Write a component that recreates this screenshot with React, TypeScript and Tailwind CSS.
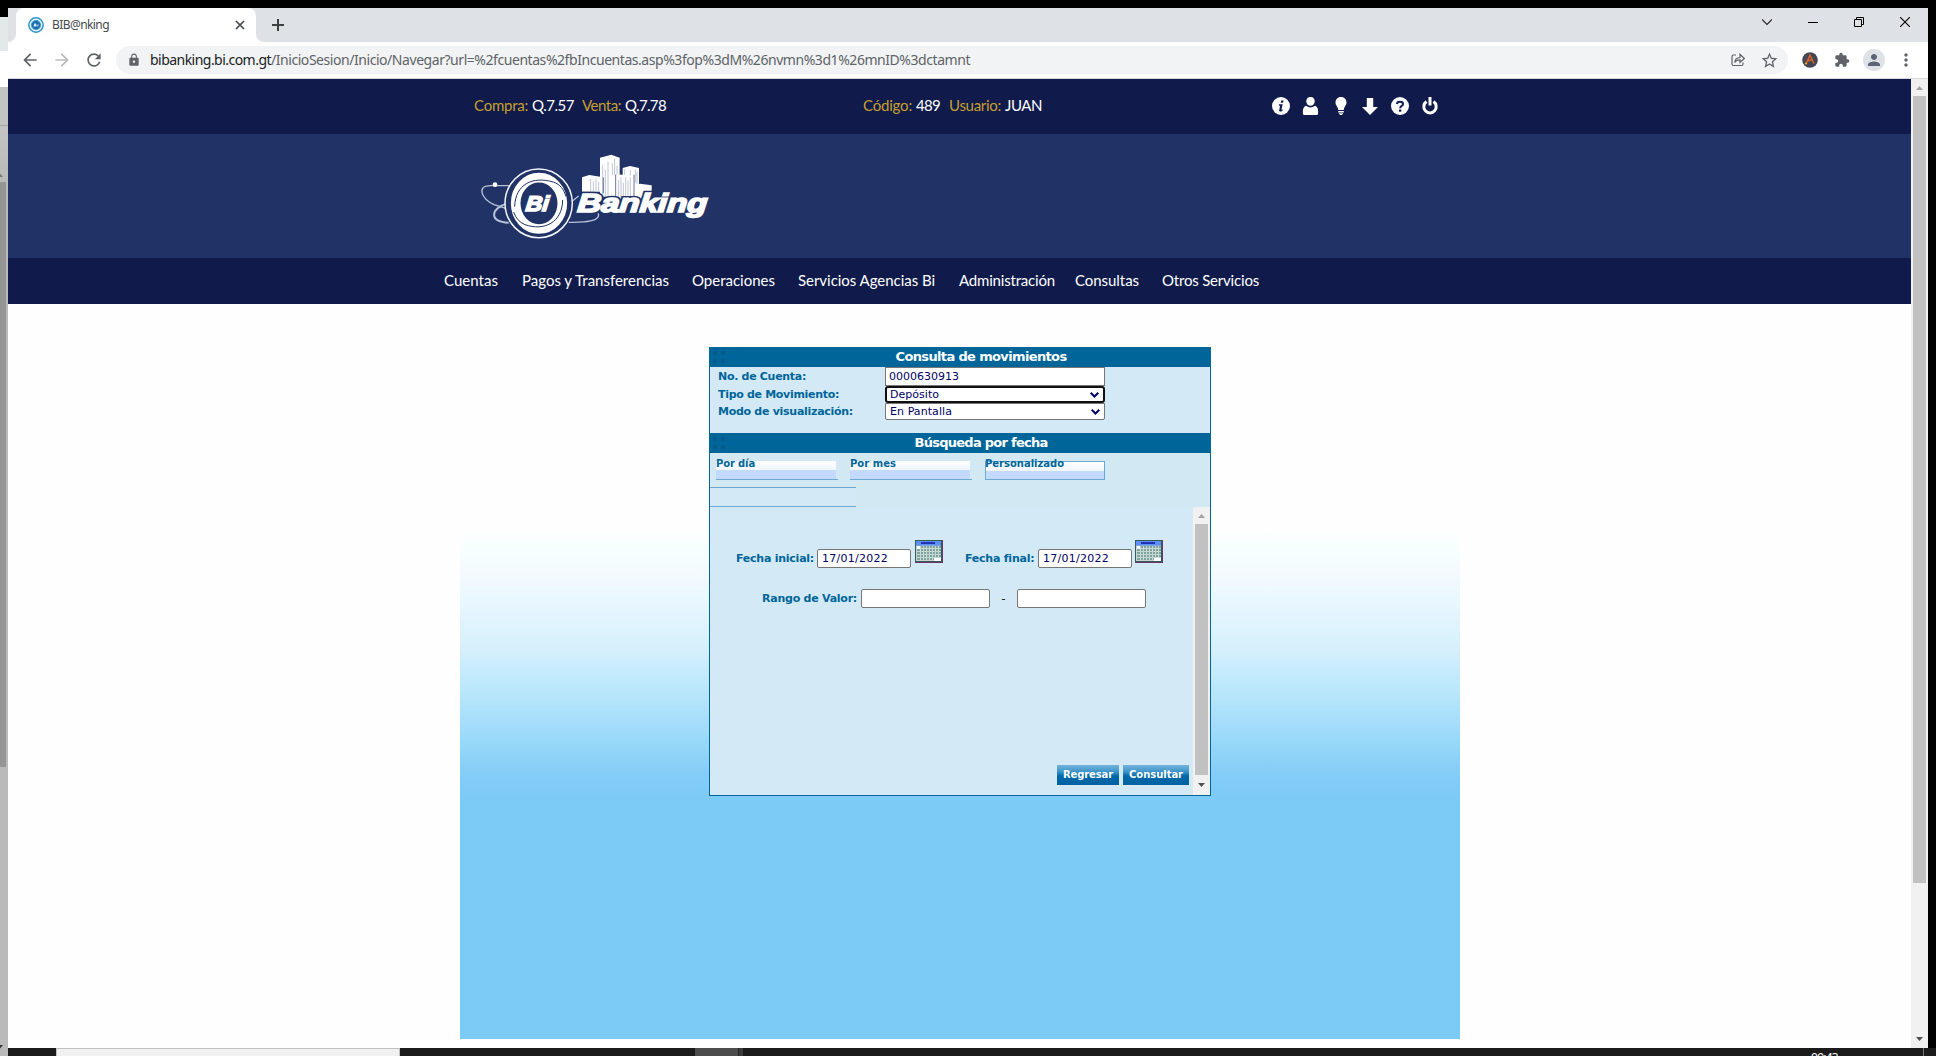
import React, { useLayoutEffect, useRef, useState } from "react";
import {
  MdArrowBack,
  MdArrowForward,
  MdRefresh,
  MdLock,
  MdStarOutline,
  MdExtension,
  MdPerson,
  MdMoreVert,
} from "react-icons/md";

/* Text run whose tracking is adjusted so that it fills a given width. */
function Fit({ w, className = "", children }: { w: number; className?: string; children: string }) {
  const ref = useRef<HTMLSpanElement>(null);
  const [ls, setLs] = useState(0);
  useLayoutEffect(() => {
    if (ref.current) setLs((w - ref.current.getBoundingClientRect().width) / children.length);
  }, [w, children]);
  return (
    <span className="block shrink-0 overflow-visible whitespace-pre" style={{ width: w }}>
      <span ref={ref} className={"inline-block whitespace-pre " + className} style={{ letterSpacing: ls }}>
        {children}
      </span>
    </span>
  );
}

function Favicon() {
  return (
    <svg viewBox="0 0 16 16" className="size-4 shrink-0">
      <circle cx="8" cy="8" r="7.2" fill="#e9f4fa" stroke="#2d96cc" strokeWidth="1.5" />
      <circle cx="8" cy="8" r="4.6" fill="#1b6fb0" stroke="#3b9ccc" strokeWidth="1" />
      <path d="M5.6 9.6l.6-3h1.9l-.2 1.1.8-.1-.4 2zM9.2 9.6l.4-2.2h1l-.4 2.2z" fill="#dcecf6" />
    </svg>
  );
}

function TitleBar() {
  return (
    <div className="flex h-[34px] shrink-0 bg-[#dee1e6]">
      <div className="flex h-[34px] w-2 bg-white">
        <div className="w-2 rounded-br-lg bg-[#dee1e6]" />
      </div>
      <div className="flex h-[34px] w-[240px] items-center rounded-t-lg bg-white pl-3 pr-[11px]">
        <Favicon />
        <div className="ml-2 flex-1 font-['Noto_Sans',sans-serif] text-xs leading-4 text-[#45494d]">
          <Fit w={57}>BIB@nking</Fit>
        </div>
        <svg viewBox="0 0 10 10" className="size-[10px]" stroke="#45494d" strokeWidth="1.7">
          <path d="M1 1l8 8M9 1l-8 8" />
        </svg>
      </div>
      <div className="flex h-[34px] w-2 bg-white">
        <div className="w-2 rounded-bl-lg bg-[#dee1e6]" />
      </div>
      <svg viewBox="0 0 12 12" className="ml-2 mt-[11px] size-3" stroke="#3c4043" strokeWidth="2">
        <path d="M6 0v12M0 6h12" />
      </svg>
      <div className="ml-auto flex gap-9 pr-[18px] pt-[9px]">
        <svg viewBox="0 0 10 10" className="size-[10px]" fill="none" stroke="#222" strokeWidth="1.1">
          <path d="M0 2.5l5 5 5-5" />
        </svg>
        <svg viewBox="0 0 10 10" className="size-[10px]" stroke="#000">
          <path d="M0 5.5h10" />
        </svg>
        <svg viewBox="0 0 10 10" className="size-[10px]" fill="none" stroke="#000">
          <path d="M.5 2.5h7v7h-7zM2.5 2.500v-2h7v7h-2" />
        </svg>
        <svg viewBox="0 0 10 10" className="size-[10px]" stroke="#000" strokeWidth="1.1">
          <path d="M0 0l10 10M10 0L0 10" />
        </svg>
      </div>
    </div>
  );
}

function ToolBar() {
  return (
    <div className="flex h-[37px] shrink-0 items-center border-b border-[#d5d7da] bg-white pl-3 text-[#5f6368]">
      <MdArrowBack className="size-[20px]" />
      <MdArrowForward className="ml-3 size-[20px] text-[#bababa]" />
      <MdRefresh className="ml-3 size-5" />
      <div className="ml-3 flex h-7 w-[1672px] items-center rounded-full bg-[#f1f3f4] pl-[11px] pr-[9px]">
        <MdLock className="size-[14px]" />
        <div className="ml-[9px] flex font-['Noto_Sans',sans-serif] text-sm leading-5">
          <Fit w={121} className="text-[#202124]">bibanking.bi.com.gt</Fit>
          <Fit w={699}>/InicioSesion/Inicio/Navegar?url=%2fcuentas%2fbIncuentas.asp%3fop%3dM%26nvmn%3d1%26mnID%3dctamnt</Fit>
        </div>
        <svg viewBox="0 0 14 14" className="ml-auto size-[14px]" fill="none" stroke="#5f6368" strokeWidth="1.2">
          <path d="M5 2H2.500Q1 2 1 3.500v7.500Q1 12.500 2.500 12.500h8Q12 12.500 12 11V9.500" />
          <path d="M3.800 9.500Q4 4.800 9 4.500V1.300l4.300 4.200L9 9.300V6.800Q5.500 6.600 3.800 9.500z" />
        </svg>
        <MdStarOutline className="ml-[15px] size-[19px]" />
      </div>
      <svg viewBox="0 0 16 16" className="ml-[14px] size-4">
        <circle cx="8" cy="8" r="7.800" fill="#454553" />
        <path d="M4 12L8 3.200 12 11.500M5.500 9l5.500-1.500" fill="none" stroke="#d9642b" strokeWidth="1.500" />
        <circle cx="4" cy="11.500" r="1.100" fill="#f0b429" />
      </svg>
      <MdExtension className="ml-4 size-[16px]" />
      <span className="ml-[13px] flex size-[22px] items-center justify-center rounded-full bg-[#dee1e6]">
        <MdPerson className="size-[18px] text-[#5b6477]" />
      </span>
      <MdMoreVert className="ml-[11px] size-5" />
    </div>
  );
}

const menu: [string, number, number][] = [
  ["Cuentas", 54, 0],
  ["Pagos y Transferencias", 147, 24],
  ["Operaciones", 83, 23],
  ["Servicios Agencias Bi", 137, 23],
  ["Administración", 96, 24],
  ["Consultas", 64, 20],
  ["Otros Servicios", 97, 23],
];

function Logo() {
  return (
    <svg viewBox="0 0 780 330" className="h-[110px] w-[260px]">
      <g fill="none" stroke="#b9c2da" strokeWidth="4">
        <path d="M120 137H62C18 137 34 176 72 194L110 206" />
        <path d="M112 190C62 205 55 245 116 248" strokeWidth="6" />
        <path d="M296 247C345 248 392 244 385 220" />
        <path d="M296 192L326 168" />
      </g>
      <circle cx="75" cy="134" r="7" fill="#fff" />
      <ellipse cx="206" cy="190" rx="101" ry="103" fill="#203266" stroke="#f4f6fb" strokeWidth="4.500" />
      <ellipse cx="207" cy="190" rx="70" ry="77" fill="none" stroke="#fff" strokeWidth="29" />
      <path d="M134 200C136 132 188 108 250 126C270 133 282 148 288 170" fill="none" stroke="#203266" strokeWidth="3" />
      <path d="M278 180C277 248 222 274 165 254C148 247 137 234 131 216" fill="none" stroke="#203266" strokeWidth="3" />
      <g transform="translate(166 214) skewX(-6)">
        <text fontFamily="'Liberation Sans', sans-serif" fontStyle="italic" fontWeight="700" fontSize="64" fill="#fff" stroke="#fff" strokeWidth="5" textLength="68" lengthAdjust="spacingAndGlyphs">Bi</text>
      </g>
      <g fill="#fff">
        <path d="M336 112L358 105 400 112V155H336z" />
        <path d="M390 53L424 44 449 53V170H390z" />
        <path d="M458 84L480 78 507 84V170H458z" />
        <path d="M437 104H492V180H437z" />
        <path d="M492 138L510 131 545 136V178H492z" />
      </g>
      <g stroke="#203266" strokeWidth="1.500" opacity=".55">
        <path d="M362 116v38M370 124v30M378 116v38M386 126v28M398 74v98M406 90v82M414 66v104M427 70v36M434 56v50M441 78v26M464 88v16M481 90v16M496 88v40M501 94v38M446 120v54M453 112v62M460 128v48M467 112v64M474 122v54M481 112v60" />
      </g>
      <path d="M400 112V160M437 104V176M492 104V170" stroke="#203266" strokeWidth="2" />
      <g transform="translate(321 215) skewX(-4)">
        <text fontFamily="'Liberation Sans', sans-serif" fontStyle="italic" fontWeight="700" fontSize="78" fill="#fff" stroke="#203266" strokeWidth="14" textLength="390" lengthAdjust="spacingAndGlyphs">Banking</text>
        <text fontFamily="'Liberation Sans', sans-serif" fontStyle="italic" fontWeight="700" fontSize="78" fill="#fff" stroke="#fff" strokeWidth="5" textLength="390" lengthAdjust="spacingAndGlyphs">Banking</text>
      </g>
    </svg>
  );
}

function HeaderIcons() {
  const cls = "size-[18px]";
  return (
    <div className="flex gap-[11.8px]">
      <svg viewBox="0 0 18 18" className={cls}>
        <circle cx="9" cy="9" r="9" fill="#fff" />
        <path d="M9.200 3.500h2.300L11 5.700H8.700zM7 7.200h3.700L9.400 12.800l1.300-.3-.3 1.400q-3 1.300-3.300-.5l1-4.700-1.300.1z" fill="#101b4c" />
      </svg>
      <svg viewBox="0 0 18 18" className={cls} fill="#fff">
        <ellipse cx="8.500" cy="4.300" rx="4.200" ry="4.500" />
        <path d="M4 8.700Q8.500 12.200 13 8.700 16.100 10 16.100 14V16.500Q16.100 18 14.500 18H2.500Q.9 18 .9 16.500V14Q.9 10 4 8.700z" />
      </svg>
      <svg viewBox="0 0 18 18" className={cls} fill="#fff">
        <path d="M9 0C5.500 0 3.500 2.500 3.500 5.500 3.500 8.500 6 9.500 6.200 13h5.600C12 9.500 14.500 8.500 14.500 5.500 14.500 2.500 12.500 0 9 0zM6.200 14h5.600v1.500H6.200zM6.800 16.300h4.400L10 18H8z" />
      </svg>
      <svg viewBox="0 0 18 18" className={cls} fill="#fff">
        <path d="M5.800 1h6.400v9H17l-8 8-8-8h4.800z" />
      </svg>
      <svg viewBox="0 0 18 18" className={cls}>
        <circle cx="9" cy="9" r="9" fill="#fff" />
        <path d="M6 7.100Q6 4.700 9 4.700T12 7Q12 8.400 10.400 9.200 9.200 9.800 9.200 11.200" fill="none" stroke="#101b4c" strokeWidth="2" />
        <path d="M8 12.500h2.300v2.200H8z" fill="#101b4c" />
      </svg>
      <svg viewBox="0 0 18 18" className={cls} fill="none" stroke="#fff">
        <path d="M5.500 4.600A6.200 6.200 0 1 0 12.500 4.600" strokeWidth="3" />
        <path d="M9 0v8.500" strokeWidth="3" />
      </svg>
    </div>
  );
}

function SiteHeader() {
  return (
    <div className="flex shrink-0 flex-col font-['Lato',sans-serif] text-[15px] leading-5 text-white">
      <div className="flex h-[55px] items-center bg-[#101b4c] pb-[3px] pl-[466px]">
        <div className="flex">
          <Fit w={54} className="text-[#c79f2c]">Compra:</Fit>
          <span className="w-1" />
          <Fit w={42}>Q.7.57</Fit>
          <span className="w-2" />
          <Fit w={39} className="text-[#c79f2c]">Venta:</Fit>
          <span className="w-1" />
          <Fit w={41}>Q.7.78</Fit>
        </div>
        <div className="ml-[197px] flex">
          <Fit w={49} className="text-[#c79f2c]">Código:</Fit>
          <span className="w-1" />
          <Fit w={24}>489</Fit>
          <span className="w-[9px]" />
          <Fit w={52} className="text-[#c79f2c]">Usuario:</Fit>
          <span className="w-1" />
          <Fit w={37}>JUAN</Fit>
        </div>
        <div className="ml-[230px] pt-px">
          <HeaderIcons />
        </div>
      </div>
      <div className="flex h-[124px] bg-[#203266] pl-[462px] pt-[6px]">
        <Logo />
      </div>
      <div className="flex h-[46px] items-center bg-[#101b4c] pb-[2px] pl-[436px]">
        {menu.map(([label, w, gap]) => (
          <div key={label} style={{ marginLeft: gap }}>
            <Fit w={w}>{label}</Fit>
          </div>
        ))}
      </div>
    </div>
  );
}

function SectionHeader({ title, w }: { title: string; w: number }) {
  return (
    <div className="relative flex h-5 shrink-0 items-center justify-center bg-[#00669a] pl-[42px] text-[13px] font-bold leading-5 text-white">
      <svg viewBox="0 0 13 13" className="absolute left-[3px] top-[4px] size-[13px]" fill="#075b8c">
        <path d="M0 0h4v4H0zM8 0h4v4H8zM0 8h4v4H0zM8 8h4v4H8z" />
      </svg>
      <Fit w={w}>{title}</Fit>
    </div>
  );
}

function Chevron() {
  return (
    <svg viewBox="0 0 9 6" className="ml-auto mr-[4px] h-[6px] w-[9px]" fill="none" stroke="#000066" strokeWidth="2">
      <path d="M.7.800l3.800 3.700L8.300.800" />
    </svg>
  );
}

function CalendarIcon() {
  return (
    <svg viewBox="0 0 28 23" className="h-[23px] w-7 shrink-0" shapeRendering="crispEdges">
      <path d="M0 0h28v23H0z" fill="#6d3570" />
      <path d="M0 0h27v22H0z" fill="#355b56" />
      <path d="M1 1h25v20H1z" fill="#c9d5cf" />
      <path d="M1 1h25v5H1z" fill="#5c90f5" />
      <path d="M6 2h14v2H6z" fill="#2031b4" />
      <path d="M1 5h25v1H1z" fill="#7ea4dd" />
      <path d="M5 6h21v12H5zM2 9h3v11H2zM5 18h14v2H5z" fill="#7fa3a0" />
      <path d="M1 8h25M1 11h25M1 14h25M1 17h25M5.500 6v15M8.500 6v15M11.500 6v15M14.500 6v15M17.500 6v15M20.500 6v15M23.500 6v15" stroke="#c8d8d3" />
      <path d="M2 6h3v3H2zM19 18h7v3h-7z" fill="#fff" />
    </svg>
  );
}

function Tab({ label, w }: { label: string; w: number }) {
  return (
    <div className="h-[19px] w-[122px] border-b border-[#6aaad4]">
      <div className="h-[18px] w-[120px] bg-[linear-gradient(#fff,#f0f6fe_9px,#c3dafd_9px,#c3dafd)]">
        <div className="h-3 -translate-y-[3px] leading-3">
          <Fit w={w} className="text-[10px] font-bold">{label}</Fit>
        </div>
      </div>
    </div>
  );
}

function ActiveTab({ label, w }: { label: string; w: number }) {
  return (
    <div className="ml-px h-[19px] w-[120px] border border-[#6aaad4] bg-[linear-gradient(#fff,#f0f6fe_9px,#c3dafd_9px,#c3dafd)]">
      <div className="-ml-px h-3 -translate-y-1 leading-3">
        <Fit w={w} className="text-[10px] font-bold">{label}</Fit>
      </div>
    </div>
  );
}

function Field({ cls, children }: { cls: string; children?: React.ReactNode }) {
  return <div className={"flex shrink-0 items-center border bg-white text-[#000066] " + cls}>{children}</div>;
}

function Arrow({ up = false, color }: { up?: boolean; color: string }) {
  return (
    <svg viewBox="0 0 7 4" className="h-1 w-[7px]" fill={color}>
      <path d={up ? "M0 4L3.500 0 7 4z" : "M0 0h7L3.500 4z"} />
    </svg>
  );
}

function QueryPanel() {
  return (
    <div className="flex h-[449px] w-[502px] flex-col border border-[#00669a] bg-[#d3e9f5] font-['DejaVu_Sans',sans-serif] text-[11px] leading-[14px] text-[#00669a]">
      <div className="-mt-px" />
      <SectionHeader title="Consulta de movimientos" w={171} />
      <div className="flex h-[66px] shrink-0">
        <div className="flex w-[175px] flex-col pl-2 pt-[3px] font-bold">
          <div className="h-[18px]"><Fit w={88}>No. de Cuenta:</Fit></div>
          <div className="h-[17px]"><Fit w={121}>Tipo de Movimiento:</Fit></div>
          <div className="h-[17px]"><Fit w={135}>Modo de visualización:</Fit></div>
        </div>
        <div className="flex w-[220px] flex-col">
          <Field cls="h-[19px] w-[220px] border-[#767676] pl-[3px]"><Fit w={70}>0000630913</Fit></Field>
          <Field cls="h-[17px] w-[220px] rounded-[3px] border-2 border-[#101010] pl-[3px]"><Fit w={49}>Depósito</Fit><Chevron /></Field>
          <Field cls="h-[17px] w-[220px] rounded-b-[2px] border-[#767676] pl-1"><Fit w={62}>En Pantalla</Fit><Chevron /></Field>
        </div>
      </div>
      <SectionHeader title="Búsqueda por fecha" w={133} />
      <div className="flex h-[54px] shrink-0 flex-col bg-[#d2e8f3]">
        <div className="flex gap-3 pl-[6px] pt-2">
          <Tab label="Por día" w={39} />
          <Tab label="Por mes" w={46} />
          <ActiveTab label="Personalizado" w={79} />
        </div>
        <div className="mt-[7px] h-5 w-[146px] shrink-0 border-y border-[#6aaad4] bg-[#d3e9f5]" />
      </div>
      <div className="flex min-h-0 flex-1">
        <div className="flex w-[483px] flex-col">
          <div className="flex h-[61px] items-end pl-[26px]">
            <div className="pb-[2px] font-bold"><Fit w={78}>Fecha inicial:</Fit></div>
            <Field cls="ml-[3px] h-[19px] w-[94px] rounded-[2px] border-[#767676] pl-1"><Fit w={66}>17/01/2022</Fit></Field>
            <div className="ml-1 pb-[5px]"><CalendarIcon /></div>
            <div className="ml-[22px] pb-[2px] font-bold"><Fit w={69}>Fecha final:</Fit></div>
            <Field cls="ml-1 h-[19px] w-[94px] rounded-[2px] border-[#767676] pl-1"><Fit w={66}>17/01/2022</Fit></Field>
            <div className="ml-[3px] pb-[5px]"><CalendarIcon /></div>
          </div>
          <div className="mt-[21px] flex items-center pl-[52px]">
            <div className="font-bold"><Fit w={95}>Rango de Valor:</Fit></div>
            <Field cls="ml-1 h-[19px] w-[129px] rounded-[2px] border-[#767676]" />
            <span className="w-[27px] text-center text-black">-</span>
            <Field cls="h-[19px] w-[129px] rounded-[2px] border-[#767676]" />
          </div>
          <div className="mb-[10px] mt-auto flex justify-end gap-1 pr-1 text-[10px] font-bold text-white">
            <button className="flex h-5 w-[62px] items-center justify-center bg-[linear-gradient(#74b4dc,#3b93c8_7px,#0068a8_11px,#0063a3)]"><Fit w={50}>Regresar</Fit></button>
            <button className="flex h-5 w-[66px] items-center justify-center bg-[linear-gradient(#74b4dc,#3b93c8_7px,#0068a8_11px,#0063a3)]"><Fit w={54}>Consultar</Fit></button>
          </div>
        </div>
        <div className="flex w-[17px] flex-col items-center bg-[#f1f1f1]">
          <div className="flex h-[17px] items-center"><Arrow up color="#a3a3a3" /></div>
          <div className="-ml-px h-[251px] w-[13px] bg-[#c1c1c1]" />
          <div className="flex flex-1 items-center pb-px"><Arrow color="#505050" /></div>
        </div>
      </div>
    </div>
  );
}

function PreviousWindowEdge() {
  return (
    <div className="flex w-2 shrink-0 flex-col bg-[#bababa]">
      <div className="h-[17px] bg-black" />
      <div className="h-[34px] bg-[#e3e8ea]" />
      <div className="h-9 bg-white" />
      <div className="h-[39px] border-b border-[#a6a6a6] bg-[#c4c4c4]" />
      <div className="h-[56px] overflow-hidden bg-linear-to-b from-[#c4c4c4] to-[#bababa] pt-[47px]">
        <div className="-ml-1"><Arrow up color="#777" /></div>
      </div>
      <div className="h-[585px] w-[6px] bg-[#959595]" />
      <div className="mt-auto h-[11px] overflow-hidden">
        <div className="-ml-1"><Arrow color="#333" /></div>
      </div>
    </div>
  );
}

export default function App() {
  return (
    <div className="flex h-[1056px] w-[1936px] overflow-hidden bg-black">
      <PreviousWindowEdge />
      <div className="flex w-[1928px] flex-col pt-2">
        <div className="flex h-[1040px] w-[1920px] flex-col">
          <TitleBar />
          <ToolBar />
          <div className="flex min-h-0 flex-1">
            <div className="flex w-[1903px] flex-col bg-[#fefefe]">
              <SiteHeader />
              <div className="ml-[452px] h-[735px] w-[1000px] bg-[linear-gradient(#fefefe,#fefefe_226px,#f8ffff_244px,#f1f7ff_281px,#edfaff_283px,#e3f4fe_313px,#d8f2fc_336px,#d2eefb_353px,#ceeeff_354px,#b4e5fa_396px,#a4dcfb_421px,#99d9fa_436px,#89cff7_461px,#83cdf8_471px,#7ccaf6_496px)] pl-[249px] pt-[43px]">
                <QueryPanel />
              </div>
            </div>
            <div className="flex w-[17px] flex-col items-center bg-[#f1f1f1]">
              <div className="flex h-[17px] items-center pt-px"><Arrow up color="#a3a3a3" /></div>
              <div className="-ml-px h-[787px] w-[13px] bg-[#c1c1c1]" />
              <div className="mt-auto flex h-[19px] items-center"><Arrow color="#505050" /></div>
            </div>
          </div>
        </div>
        <div className="flex h-2 overflow-hidden bg-[#1b1b1b]">
          <div className="ml-12 h-2 w-[344px] border border-b-0 border-[#c0c0c0] bg-[#f1f1f1]" />
          <div className="ml-[295px] h-2 w-[44px] border-r border-[#222] bg-[#4c4c4c]" />
          <div className="h-2 w-1 bg-[#3a3a3a]" />
          <div className="ml-[1068px] h-2 w-[27px] overflow-hidden pt-[5px] font-['Noto_Sans',sans-serif] text-xs leading-[10px] text-white">
            <Fit w={27}>09:43</Fit>
          </div>
          <div className="ml-[85px] w-px bg-[#777]" />
        </div>
      </div>
    </div>
  );
}
